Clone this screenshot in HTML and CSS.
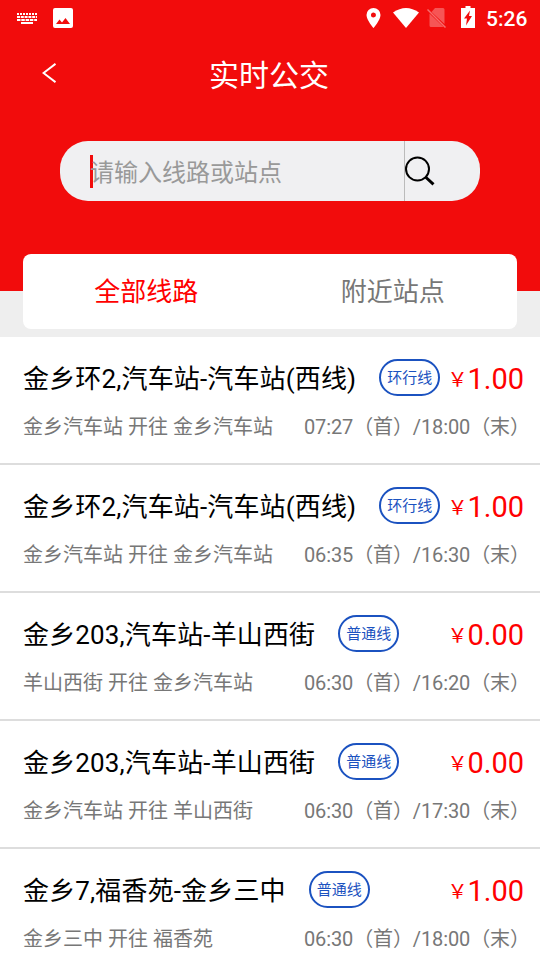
FILE: index.html
```html
<!DOCTYPE html>
<html lang="zh-CN">
<head>
<meta charset="utf-8">
<title>实时公交</title>
<link rel="stylesheet" href="styles.css">
</head>
<body>
<header class="hero">
  <div class="status">
    <svg class="kbd" width="20" height="12" viewBox="0 0 20 12"><g fill="none" stroke="#fff" stroke-width="2"><path d="M0 2h20" stroke-dasharray="2 1"/><path d="M0 5h20" stroke-dasharray="3 .8"/><path d="M0 8h20" stroke-dasharray="3.500 .8"/><path d="M4 11h12"/></g></svg>
    <svg class="pic" width="20" height="20" viewBox="0 0 20 20"><path fill="#fff" fill-rule="evenodd" d="M2 0h16q2 0 2 2v16q0 2-2 2H2q-2 0-2-2V2q0-2 2-2zM3 16h14l-4.500-6-3.500 4.500-2.500-3z"/></svg>
    <span class="spacer"></span>
    <svg class="pin" width="15" height="20" viewBox="0 0 15 20"><path fill="#fff" fill-rule="evenodd" d="M7.500 0a7 7 0 0 1 7 7c0 5-7 13-7 13S.5 12 .5 7a7 7 0 0 1 7-7zm0 4.500a2.500 2.500 0 1 0 0 5 2.500 2.500 0 0 0 0-5z"/></svg>
    <svg class="wifi" width="26" height="20" viewBox="0 0 26 20"><path fill="#fff" d="M0 4.500Q13-4.500 26 4.500L13 20z"/></svg>
    <svg class="sim" width="20" height="20" viewBox="0 0 20 20"><path fill="#fff" opacity=".3" d="M8 0h8q1.500 0 1.500 1.500V16L4.500 4zM2.500 5.500L16.500 19H4q-1.500 0-1.500-1.500z"/><path d="M.5 1.500l18 18" stroke="#fff" opacity=".4" stroke-width="1.500"/></svg>
    <svg class="bat" width="14" height="22" viewBox="0 0 14 22"><path fill="#fff" fill-rule="evenodd" d="M4.500 0h5v2H14v20H0V2h4.500zM9 4.500L3 12.500h3L5 19.500l6-9.500H8z"/></svg>
    <span class="clock">5:26</span>
  </div>
  <div class="titlebar">
    <svg class="back" width="14" height="20" viewBox="0 0 14 20"><path d="M13.500 .8L1.500 10l12 9.200" fill="none" stroke="#fff" stroke-width="2"/></svg>
    <h1>实时公交</h1>
  </div>
  <div class="search">
    <div class="field"><i class="caret"></i><span>请输入线路或站点</span></div>
    <div class="go"><svg width="30" height="30" viewBox="0 0 30 30"><circle cx="12.500" cy="13" r="11.500" fill="none" stroke="#000" stroke-width="2"/><path d="M20.500 21l8 7.300" stroke="#000" stroke-width="3"/></svg></div>
  </div>
</header>
<nav class="tabs"><span class="tab active">全部线路</span><span class="tab">附近站点</span></nav>
<main class="list">
  <article class="row"><div class="top"><h2>金乡环2,汽车站-汽车站(西线)</h2><span class="tag">环行线</span><span class="price"><small>￥</small>1.00</span></div><div class="bottom"><span>金乡汽车站 开往 金乡汽车站</span><span class="time">07:27（首）/18:00（末）</span></div></article>
  <article class="row"><div class="top"><h2>金乡环2,汽车站-汽车站(西线)</h2><span class="tag">环行线</span><span class="price"><small>￥</small>1.00</span></div><div class="bottom"><span>金乡汽车站 开往 金乡汽车站</span><span class="time">06:35（首）/16:30（末）</span></div></article>
  <article class="row"><div class="top"><h2>金乡203,汽车站-羊山西街</h2><span class="tag">普通线</span><span class="price"><small>￥</small>0.00</span></div><div class="bottom"><span>羊山西街 开往 金乡汽车站</span><span class="time">06:30（首）/16:20（末）</span></div></article>
  <article class="row"><div class="top"><h2>金乡203,汽车站-羊山西街</h2><span class="tag">普通线</span><span class="price"><small>￥</small>0.00</span></div><div class="bottom"><span>金乡汽车站 开往 羊山西街</span><span class="time">06:30（首）/17:30（末）</span></div></article>
  <article class="row"><div class="top"><h2>金乡7,福香苑-金乡三中</h2><span class="tag">普通线</span><span class="price"><small>￥</small>1.00</span></div><div class="bottom"><span>金乡三中 开往 福香苑</span><span class="time">06:30（首）/18:00（末）</span></div></article>
</main>
</body>
</html>
```
FILE: styles.css
```css
* { box-sizing: border-box; }
html { height: 960px; overflow: hidden; }
body { margin: 0; width: 540px; height: 960px; overflow: hidden; background: #eee; font-family: Roboto, "Noto Sans CJK SC", sans-serif; }
svg { display: block; flex: none; }
h1, h2 { margin: 0; font-weight: 400; }
.hero { height: 291px; background: #f20c0c; }
.status { height: 36px; display: flex; align-items: center; padding: 0 12px 0 17px; color: #fff; }
.pic { margin-left: 16px; }
.spacer { flex: 1; }
.wifi { margin-left: 12px; }
.sim { margin-left: 8px; }
.bat { margin: 0 0 2px 14px; }
.clock { width: 42px; margin-left: 11px; padding-top: 2px; font-size: 21px; font-weight: 500; white-space: nowrap; }
.titlebar { height: 74px; display: grid; grid-template-columns: 100px 1fr 100px; align-items: center; color: #fff; }
.back { margin: 0 0 1px 42px; }
.titlebar h1 { padding: 5px 2px 0 0; text-align: center; font-size: 30px; line-height: 40px; }
.search { width: 420px; height: 60px; margin: 31px auto 0; display: flex; border-radius: 28px; background: #f0f0f2; }
.field { width: 345px; display: flex; align-items: center; padding-left: 30px; border-right: 1px solid #bbb; color: #999; font-size: 24px; }
.field span { padding-bottom: 2px; }
.caret { width: 3px; height: 33px; margin-right: -3px; background: #f20c0c; }
.go { display: flex; align-items: center; }
.tabs { width: 494px; height: 75px; margin: -37px auto 8px; padding: 0 1px 4px 0; position: relative; display: grid; grid-template-columns: 1fr 1fr; align-items: center; text-align: center; border-radius: 8px; background: #fff; color: #777; font-size: 26px; }
.active { color: #f00; }
.row { height: 128px; padding: 19px 16px 0 23px; background: #fff; border-bottom: 2px solid #ddd; }
.top { height: 43px; display: flex; align-items: center; white-space: nowrap; }
.top h2 { padding-top: 3px; font-size: 26px; line-height: 40px; letter-spacing: .15px; color: #000; }
.tag { width: 61px; height: 37px; margin-left: 23px; border: 2px solid #1b52c0; border-radius: 19px; color: #1b52c0; font-size: 15px; line-height: 34px; text-align: center; }
.price { display: flex; align-items: baseline; margin-left: auto; padding-top: 2px; color: #f00; font-size: 29px; line-height: 40px; }
.price small { font-size: 20px; line-height: 30px; position: relative; top: -2px; }
.bottom { height: 30px; margin-top: 13px; display: flex; justify-content: space-between; color: #777; font-size: 20px; line-height: 30px; white-space: nowrap; }
.time { width: 220px; letter-spacing: -.12px; }
```
